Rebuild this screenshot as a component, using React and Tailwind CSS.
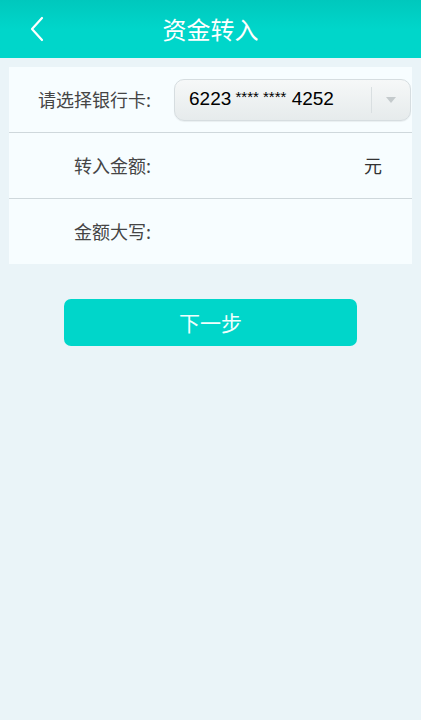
import { useState } from "react";

const font = {
    fontFamily: '"Noto Sans CJK SC", "Liberation Sans", sans-serif',
};

function Row({ label, children, last }) {
    return (
        <div
            className={`flex items-center ${last ? "h-[65px]" : "h-[66px] border-b border-[#cfd8dc]"}`}
        >
            <div className="w-[142px] text-right text-[18px] text-[#454545] shrink-0">
                {label}
            </div>
            <div className="flex-1 flex items-center">{children}</div>
        </div>
    );
}

export default function App() {
    const [card] = useState("6223 **** **** 4252");

    return (
        <div
            className="w-[421px] h-[720px] bg-[#eaf4f8] overflow-hidden"
            style={font}
        >
            <div className="h-[58px] bg-gradient-to-b from-[#00c8bd] via-[#00d6ca] to-[#00d6ca] flex items-center relative">
                <svg
                    className="absolute left-[29px] top-[16px]"
                    width="16"
                    height="26"
                    viewBox="0 0 16 26"
                    fill="none"
                >
                    <path
                        d="M13 2 L3 13 L13 24"
                        stroke="#fff"
                        strokeWidth="2.2"
                        strokeLinecap="round"
                        strokeLinejoin="round"
                    />
                </svg>
                <h1 className="w-full text-center text-white text-[24px] font-normal">
                    资金转入
                </h1>
            </div>

            <div className="mx-[9px] mt-[9px] bg-[#f7fdff]">
                <Row label="请选择银行卡:">
                    <div className="ml-[23px] mr-[1px] flex-1 h-[42px] rounded-[10px] border border-[#d6dde0] bg-gradient-to-b from-[#f6f8f8] to-[#e6ebec] flex items-center shadow-[0_1px_1px_rgba(0,0,0,0.06)]">
                        <span
                            className="flex-1 pl-[14px] text-[19px] text-black"
                            style={{ fontFamily: '"Liberation Sans", Arial, sans-serif' }}
                        >
                            {card.split(" ").map((p, i) =>
                                p.startsWith("*") ? (
                                    <span key={i} className="text-[15px] align-[3px]">
                                        {" "}
                                        {p}
                                    </span>
                                ) : (
                                    <span key={i}>
                                        {i ? " " : ""}
                                        {p}
                                    </span>
                                )
                            )}
                        </span>
                        <div className="w-[1px] h-[26px] bg-[#d9dfe1]" />
                        <div className="w-[38px] flex justify-center">
                            <div className="w-0 h-0 border-l-[5px] border-r-[5px] border-t-[6px] border-l-transparent border-r-transparent border-t-[#c4cacc]" />
                        </div>
                    </div>
                </Row>
                <Row label="转入金额:">
                    <div className="flex-1" />
                    <span className="text-[18px] text-[#333] mr-[30px]">元</span>
                </Row>
                <Row label="金额大写:" last />
            </div>

            <div className="flex justify-center mt-[35px]">
                <button className="w-[293px] h-[47px] rounded-[7px] bg-[#00d6ca] text-[#effffd] text-[21px]">
                    下一步
                </button>
            </div>
        </div>
    );
}
